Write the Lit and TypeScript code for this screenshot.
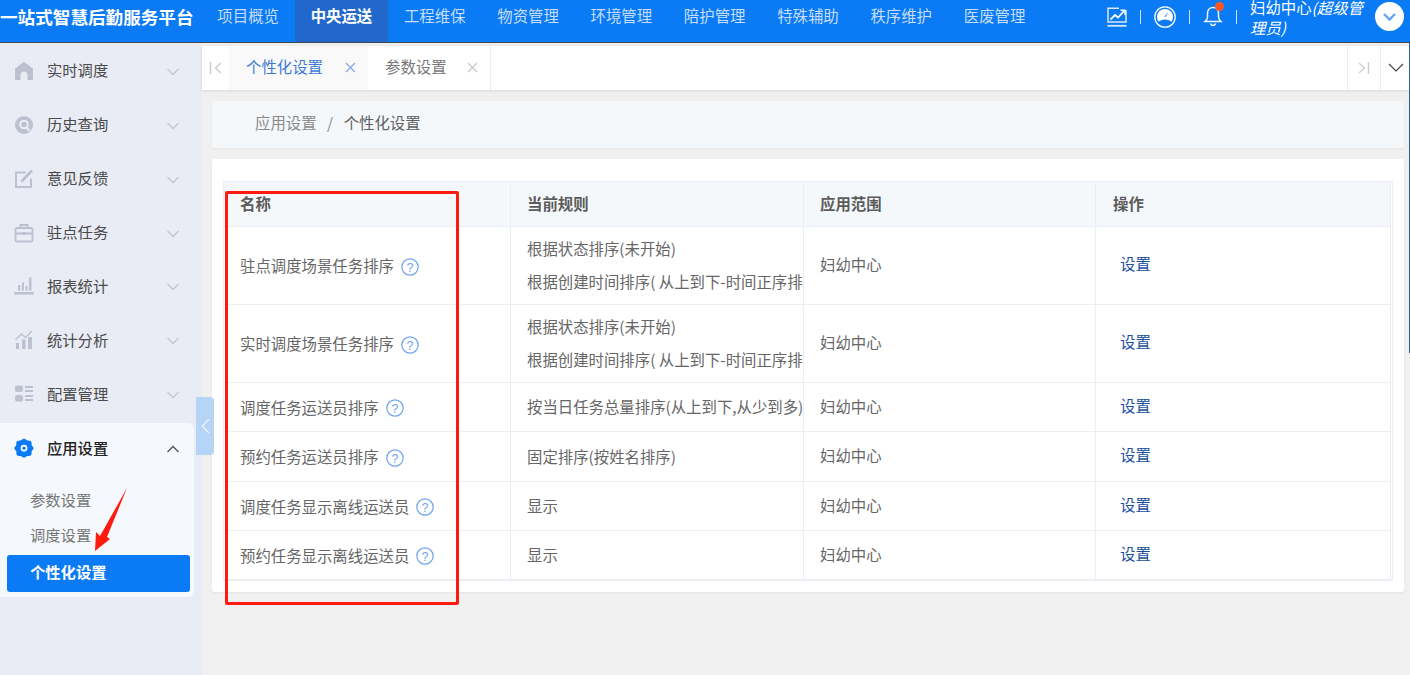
import { LitElement, html, css, svg } from "lit";
import { customElement } from "lit/decorators.js";

const NAV = ["项目概览", "中央运送", "工程维保", "物资管理", "环境管理", "陪护管理", "特殊辅助", "秩序维护", "医废管理"];

const GREY = "#bcc0cf";
const SIDE_BG = "#e9ecf5";

// sidebar icons, 20x20 box
const MENU_ICONS = [
  svg`<path fill="${GREY}" d="M10 .8 18.600 7.600a1 1 0 0 1 .4.8V18a1 1 0 0 1-1 1h-4.500v-5a3.500 3.500 0 0 0-7 0v5H2a1 1 0 0 1-1-1V8.400a1 1 0 0 1 .4-.8z"/>`,
  svg`<circle cx="10" cy="10" r="9" fill="${GREY}"/><circle cx="10" cy="9.500" r="3.800" fill="none" stroke="${SIDE_BG}" stroke-width="2"/><path d="M12.500 12.500 15.500 16" stroke="${SIDE_BG}" stroke-width="2"/>`,
  svg`<path fill="none" stroke="${GREY}" stroke-width="2" d="M17 9.500V18H2V3.500h9.500"/><path fill="none" stroke="${GREY}" stroke-width="2.800" d="M7.500 12.500 18 1.500"/>`,
  svg`<rect x="1.500" y="5" width="17" height="13.500" rx="1.500" fill="none" stroke="${GREY}" stroke-width="1.800"/><path d="M6.500 5V2h7v3M1.500 10.500h17" fill="none" stroke="${GREY}" stroke-width="1.800"/><rect x="8" y="9" width="4" height="3" fill="${GREY}"/>`,
  svg`<path fill="${GREY}" d="M0 16h20v2.400H0zM4 9h2.400v5.600H4zM8 6.500h2v8.100H8zM11.500 10h2v4.600h-2zM15 1.500h2.400v13.100H15z"/>`,
  svg`<path fill="none" stroke="${GREY}" stroke-width="1.400" d="M1.500 9.500 7.500 4l4 3.500L18 1"/><path fill="${GREY}" d="M2 13h3v6H2zM8 9.500h3.500V19H8zM14 7h4v12h-4z"/>`,
  svg`<rect x="1" y="1.500" width="8" height="6.500" rx="2" fill="${GREY}"/><rect x="1" y="11" width="8" height="6.500" rx="2" fill="${GREY}"/><path fill="${GREY}" d="M11 2h8v2h-8zM11 6h8v2h-8zM11 11h8v2h-8zM11 15h8v2h-8z"/>`,
  svg`<path fill="#0a7af5" fill-rule="evenodd" d="M10 .8c1.600 0 2.300 1.300 3.300 1.600 1.200.3 2.800-.3 3.800 1.100.9 1.300.2 2.600.6 3.700.3 1 1.800 1.600 1.800 3s-1.500 2-1.800 3c-.4 1.100.3 2.400-.6 3.700-1 1.400-2.600.8-3.800 1.100-1 .3-1.700 1.600-3.300 1.600s-2.300-1.300-3.300-1.600c-1.200-.3-2.800.3-3.800-1.100-.9-1.300-.2-2.600-.6-3.700C1.900 12.200.4 11.600.4 10.200s1.500-2 1.800-3c.4-1.100-.3-2.400.6-3.700 1-1.400 2.600-.8 3.800-1.100C7.700 2.100 8.400.8 10 .8zM10 6.800a3.400 3.400 0 1 0 0 6.800 3.400 3.400 0 0 0 0-6.800z"/><circle cx="10" cy="10.200" r="1.600" fill="#0a7af5"/>`,
];

const MENU = ["实时调度", "历史查询", "意见反馈", "驻点任务", "报表统计", "统计分析", "配置管理"];

const RULE_A = "根据状态排序(未开始)";
const RULE_B = "根据创建时间排序( 从上到下-时间正序排序)";

const ROWS = [
  { name: "驻点调度场景任务排序", rules: [RULE_A, RULE_B], h: 78 },
  { name: "实时调度场景任务排序", rules: [RULE_A, RULE_B], h: 78 },
  { name: "调度任务运送员排序", rules: ["按当日任务总量排序(从上到下,从少到多)"], h: 49 },
  { name: "预约任务运送员排序", rules: ["固定排序(按姓名排序)"], h: 50 },
  { name: "调度任务显示离线运送员", rules: ["显示"], h: 49 },
  { name: "预约任务显示离线运送员", rules: ["显示"], h: 49 },
];

@customElement("app-root")
export class AppRoot extends LitElement {
  static styles = css`
    :host {
      display: block;
      width: 1410px;
      height: 675px;
      overflow: hidden;
      position: relative;
      font-family: "Noto Sans CJK SC", "Liberation Sans", sans-serif;
      background: #f0f0f0;
      color: #666;
    }
    .top {
      height: 42px;
      background: #0a7af5;
      border-bottom: 1px solid #3c4654;
      display: flex;
      color: #fff;
    }
    .brand {
      width: 202px;
      flex: none;
      font-size: 17.6px;
      font-weight: 700;
      line-height: 34px;
      white-space: nowrap;
      overflow: hidden;
    }
    .nav {
      display: flex;
      margin-left: -0.5px;
    }
    .nav a {
      width: 93.3px;
      text-align: center;
      font-size: 15.4px;
      line-height: 30px;
      color: #c6def9;
    }
    .nav a.on {
      background: #2268cc;
      color: #fff;
      font-weight: 700;
    }
    .tools {
      margin-left: auto;
      display: flex;
      align-items: center;
      padding-right: 6px;
      height: 33px;
    }
    .tools svg { display: block; }
    .sep {
      width: 1.5px;
      height: 14px;
      background: #cfe3fb;
      margin: 0 13px 0 12.5px;
    }
    .bell { position: relative; }
    .dot {
      position: absolute;
      top: -4.5px;
      left: 12px;
      width: 9px;
      height: 9px;
      border-radius: 50%;
      background: #ff5722;
    }
    .user {
      width: 124px;
      font-size: 15.4px;
      line-height: 20px;
      color: #fff;
    }
    .user i { font-style: italic; }
    .avatar {
      width: 29px;
      height: 29px;
      border-radius: 50%;
      background: #fff;
      margin-left: 1px;
      display: flex;
      align-items: center;
      justify-content: center;
    }
    .body {
      display: flex;
      height: 632px;
    }
    .side {
      width: 202px;
      flex: none;
      background: #e9ecf5;
      padding-top: 2px;
      box-sizing: border-box;
    }
    .mi {
      height: 53.86px;
      display: flex;
      align-items: center;
      font-size: 15.3px;
      color: #4a4a4a;
      padding-left: 14px;
      width: 194px;
      box-sizing: border-box;
    }
    .mi svg.ic { margin-right: 13px; flex: none; margin-bottom: 2px; }
    .mi span { flex: 1; padding-bottom: 5px; }
    .mi svg.ch { margin-right: 14px; flex: none; }
    .group {
      width: 194px;
      background: #f5f8fd;
      border-radius: 0 6px 6px 0;
      height: 174px;
      margin-top: 1px;
    }
    .group .mi { color: #222; font-weight: 500; height: 52px; }
    .sub {
      font-size: 15.3px;
      line-height: 35px;
      padding-left: 30px;
      color: #777;
    }
    .sub.on {
      margin: 3.5px 4px 0 7px;
      padding-left: 23px;
      height: 37px;
      line-height: 33px;
      background: #0a7af5;
      color: #fff;
      font-weight: 700;
      border-radius: 3px;
    }
    .subs { padding-top: 6.5px; }
    .main {
      flex: 1;
      min-width: 0;
      display: flex;
      flex-direction: column;
    }
    .tabs {
      margin-top: 3px;
      height: 44px;
      flex: none;
      background: #fff;
      box-shadow: 0 1px 3px rgba(0, 0, 0, 0.1);
      display: flex;
      align-items: stretch;
      font-size: 15.4px;
    }
    .tb {
      width: 27px;
      display: flex;
      align-items: center;
      justify-content: center;
      flex: none;
    }
    .tab {
      display: flex;
      align-items: center;
      background: #f9f9f9;
      color: #3f7bd6;
      width: 139px;
      padding-left: 17px;
      box-sizing: border-box;
      flex: none;
    }
    .tab.plain {
      background: #fff;
      color: #777;
      width: 123px;
      border-right: 1px solid #ececec;
    }
    .tab span { width: 99px; flex: none; padding-bottom: 4px; }
    .tab.plain span { width: 82px; }
    .tab svg { margin-bottom: 1px; }
    .grow { flex: 1; }
    .tr {
      width: 32px;
      border-left: 1px solid #eee;
      display: flex;
      align-items: center;
      justify-content: center;
      flex: none;
    }
    .tr.b { width: 29px; }
    .crumb {
      margin: 11px 6px 0 10px;
      height: 47px;
      flex: none;
      background: #f5f8fb;
      box-shadow: 0 1px 2px rgba(0, 0, 0, 0.05);
      display: flex;
      align-items: center;
      padding: 0 0 6px 43px;
      box-sizing: border-box;
      font-size: 15.4px;
      color: #8a8a8a;
    }
    .crumb b { font-weight: 400; color: #5f5f5f; }
    .crumb u { text-decoration: none; margin: 0 10.5px; }
    .card {
      margin: 11px 6px 0 10px;
      height: 433px;
      flex: none;
      background: #fff;
      border-radius: 3px;
      padding: 22px 0 0 11px;
      box-sizing: border-box;
      box-shadow: 0 1px 2px rgba(0, 0, 0, 0.05);
    }
    .table {
      display: grid;
      grid-template-columns: 287px 293px 292px 295px;
      width: 1170px;
      border: 1px solid #ebeef2;
      box-sizing: border-box;
    }
    .th, .td {
      border-right: 1px solid #ebeef2;
      border-bottom: 1px solid #ebeef2;
      box-sizing: border-box;
      display: flex;
      align-items: center;
      overflow: hidden;
      white-space: nowrap;
      font-size: 15.4px;
      min-width: 0;
    }
    .th {
      height: 45px;
      background: #f5f8fb;
      font-weight: 700;
      padding-left: 16px;
      color: #5c5c5c;
      align-items: flex-start;
      line-height: 42px;
    }
    .th.op { padding-left: 17px; }
    .td { padding-left: 16px; padding-bottom: 1px; }
    .td.scope { padding-bottom: 3px; }
    .td.act { padding-left: 24px; padding-bottom: 5px; color: #1b4f9f; }
    .td.rule {
      flex-direction: column;
      align-items: flex-start;
      justify-content: center;
      gap: 9px;
      padding-bottom: 2px;
    }
    .td.rule div { line-height: 24px; }
    .q { margin-left: 7px; flex: none; margin-top: 3px; }
    .handle {
      position: absolute;
      left: 196px;
      top: 397px;
      width: 18px;
      height: 58px;
      background: #b6d4f6;
      border-radius: 0 4px 4px 0;
      display: flex;
      align-items: center;
      justify-content: center;
    }
    .mark {
      position: absolute;
      left: 225px;
      top: 191px;
      width: 234px;
      height: 414px;
      box-sizing: border-box;
      border: 3px solid #ff1a10;
      border-radius: 2px;
      pointer-events: none;
    }
    .arrow {
      position: absolute;
      left: 90px;
      top: 484px;
      pointer-events: none;
    }
    .edge {
      position: absolute;
      right: 0;
      top: 43px;
      width: 1px;
      height: 310px;
      background: #2f5f8f;
    }
  `;

  private chevron(up = false) {
    return html`<svg class="ch" width="14" height="8" viewBox="0 0 14 8">
      <path d=${up ? "M1.500 7 7 1.500 12.500 7" : "M1.500 1 7 6.500 12.500 1"} fill="none"
        stroke=${up ? "#555" : "#c3c6d2"} stroke-width="1.300"/>
    </svg>`;
  }

  private help() {
    return html`<svg class="q" width="18" height="18" viewBox="0 0 18 18">
      <circle cx="9" cy="9" r="8.200" fill="none" stroke="#6fa3ef" stroke-width="1.200"/>
      <text x="9" y="13.500" text-anchor="middle" font-size="12.500" fill="#6fa3ef"
        font-family="Liberation Sans, sans-serif">?</text>
    </svg>`;
  }

  private renderMenu() {
    return MENU.map(
      (m, i) => html`<div class="mi">
        <svg class="ic" width="20" height="20" viewBox="0 0 20 20">${MENU_ICONS[i]}</svg>
        <span>${m}</span>${this.chevron()}
      </div>`
    );
  }

  private renderRows() {
    return ROWS.map(
      (r) => html`
        <div class="td" style="height:${r.h}px">${r.name}${this.help()}</div>
        <div class="td rule" style="height:${r.h}px">
          ${r.rules.map((t) => html`<div>${t}</div>`)}
        </div>
        <div class="td scope" style="height:${r.h}px">妇幼中心</div>
        <div class="td act" style="height:${r.h}px">设置</div>
      `
    );
  }

  render() {
    return html`
      <div class="top">
        <div class="brand">一站式智慧后勤服务平台</div>
        <div class="nav">
          ${NAV.map((n, i) => html`<a class=${i === 1 ? "on" : ""}>${n}</a>`)}
        </div>
        <div class="tools">
          <svg width="20" height="20" viewBox="0 0 20 20" fill="none" stroke="#d6e8fc" stroke-width="1.500">
            <path d="M12 1.200H1V15h18V3"/>
            <path d="M0.500 18.800h19" stroke-width="1.800"/>
            <path d="M3.500 12.500 8 8l3 2.500L17 4" stroke="#fff" stroke-width="1.800"/>
            <path d="M13.500 3.200h4.500V8" stroke="#fff" stroke-width="1.500"/>
          </svg>
          <div class="sep"></div>
          <svg width="22" height="22" viewBox="0 0 22 22">
            <circle cx="11" cy="11" r="10.200" fill="none" stroke="#fff" stroke-width="1.300"/>
            <circle cx="11" cy="11" r="8" fill="#fff"/>
            <path d="M4 16.500c1.500-2.200 4.500-3 7-3s5.500.8 7 3c-1.500 1.800-4 2.800-7 2.800s-5.500-1-7-2.800z" fill="#0a7af5"/>
            <path d="M10.300 10.500 14.500 5.500 11.800 11.200z" fill="#5a9ff0"/>
          </svg>
          <div class="sep"></div>
          <div class="bell">
            <svg width="20" height="21" viewBox="0 0 20 21" fill="none" stroke="#eef6ff" stroke-width="1.500" style="display:block">
              <path d="M10 1.500c-3.500 0-5.500 2.800-5.500 6v3.500c0 2-1 3.200-2.500 4.500h16c-1.500-1.300-2.500-2.500-2.500-4.500V7.500c0-3.200-2-6-5.500-6z"/>
              <path d="M7.500 17.500c.4 1.300 1.300 2 2.500 2s2.100-.7 2.500-2"/>
            </svg>
            <div class="dot"></div>
          </div>
          <div class="sep"></div>
          <div class="user">妇幼中心<i>(超级管理员)</i></div>
          <div class="avatar">
            <svg width="15" height="10" viewBox="0 0 15 10">
              <path d="M2 2l5.500 5.500L13 2" fill="none" stroke="#62a6f5" stroke-width="2.400"/>
            </svg>
          </div>
        </div>
      </div>

      <div class="body">
        <div class="side">
          ${this.renderMenu()}
          <div class="group">
            <div class="mi">
              <svg class="ic" width="20" height="20" viewBox="0 0 20 20">${MENU_ICONS[7]}</svg>
              <span>应用设置</span>${this.chevron(true)}
            </div>
            <div class="subs">
              <div class="sub">参数设置</div>
              <div class="sub">调度设置</div>
              <div class="sub on">个性化设置</div>
            </div>
          </div>
        </div>

        <div class="main">
          <div class="tabs">
            <div class="tb">
              <svg width="13" height="12" viewBox="0 0 13 12" fill="none" stroke="#c9c9c9" stroke-width="1.400">
                <path d="M1.500 0v12M12 1 6.500 6l5.500 5"/>
              </svg>
            </div>
            <div class="tab">
              <span>个性化设置</span>
              <svg width="11" height="11" viewBox="0 0 11 11" fill="none" stroke="#7da7e6" stroke-width="1.100">
                <path d="M1 1l9 9M10 1l-9 9"/>
              </svg>
            </div>
            <div class="tab plain">
              <span>参数设置</span>
              <svg width="11" height="11" viewBox="0 0 11 11" fill="none" stroke="#c5c5c5" stroke-width="1.100">
                <path d="M1 1l9 9M10 1l-9 9"/>
              </svg>
            </div>
            <div class="grow"></div>
            <div class="tr">
              <svg width="12" height="12" viewBox="0 0 12 12" fill="none" stroke="#cfcfcf" stroke-width="1.400">
                <path d="M1 1l5.500 5L1 11M10.500 0v12"/>
              </svg>
            </div>
            <div class="tr b">
              <svg width="16" height="10" viewBox="0 0 16 10" fill="none" stroke="#444" stroke-width="1.200">
                <path d="M1 1l7 7 7-7"/>
              </svg>
            </div>
          </div>

          <div class="crumb">应用设置<u>/</u><b>个性化设置</b></div>

          <div class="card">
            <div class="table">
              <div class="th">名称</div>
              <div class="th">当前规则</div>
              <div class="th">应用范围</div>
              <div class="th op">操作</div>
              ${this.renderRows()}
            </div>
          </div>
        </div>
      </div>

      <div class="handle">
        <svg width="9" height="16" viewBox="0 0 9 16" fill="none" stroke="#eaf3fe" stroke-width="1.500">
          <path d="M8 1 1.500 8 8 15"/>
        </svg>
      </div>
      <div class="mark"></div>
      <svg class="arrow" width="42" height="70" viewBox="0 0 42 70">
        <path fill="#ff1a10" d="M37 4 17 53l3 2L5 67l1-19 4 4z"/>
      </svg>
      <div class="edge"></div>
    `;
  }
}
